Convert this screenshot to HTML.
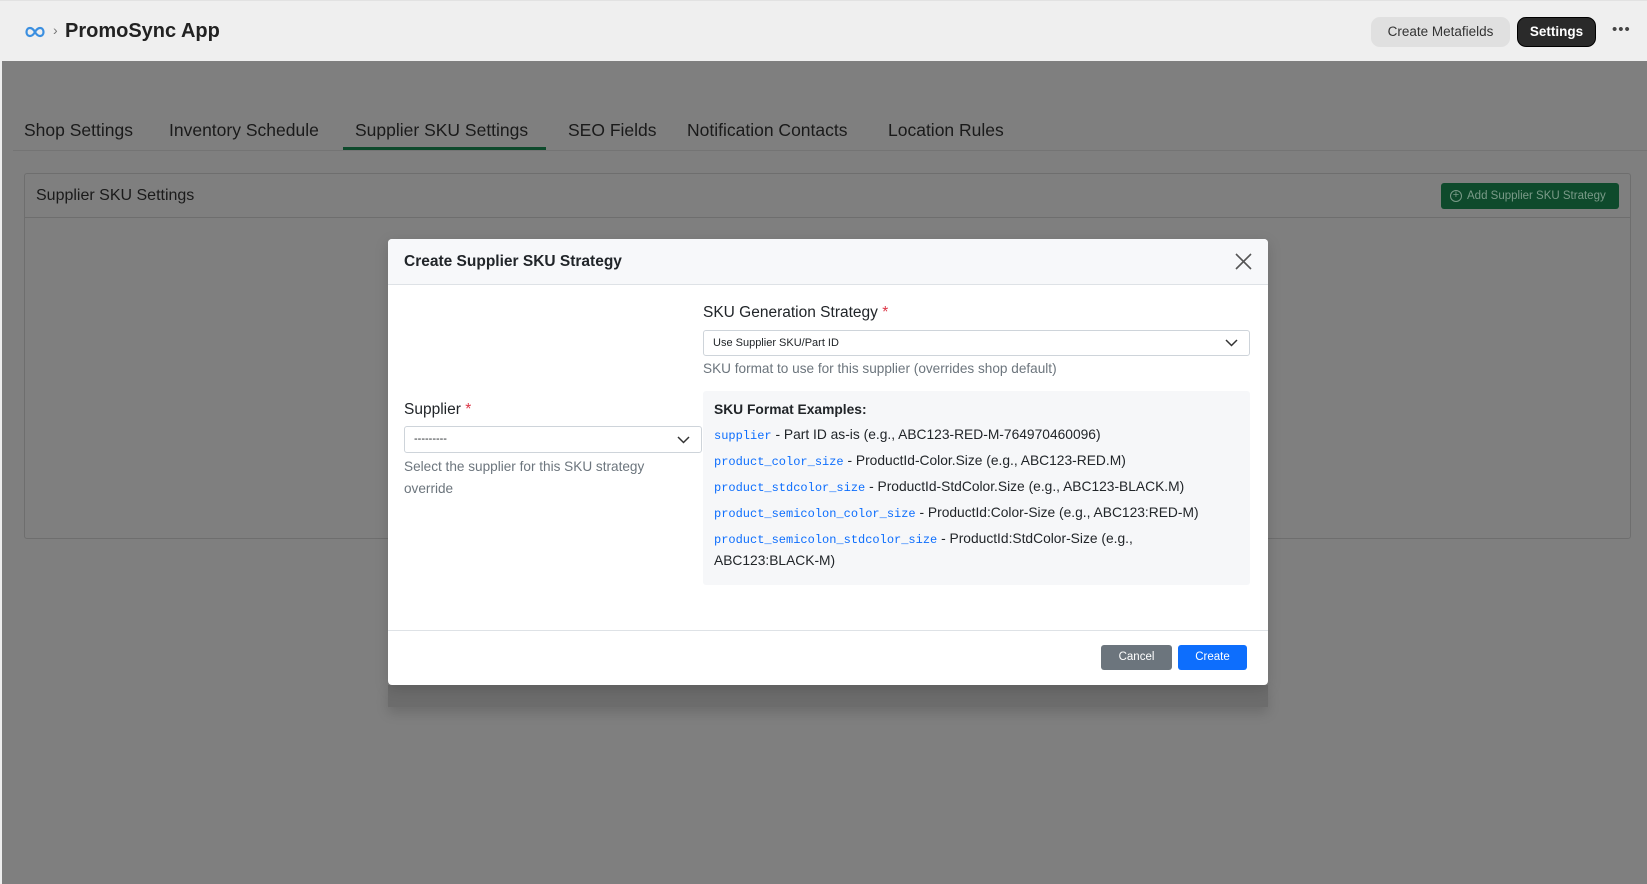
<!DOCTYPE html>
<html><head><meta charset="utf-8"><style>
*{box-sizing:border-box;margin:0;padding:0}
body{width:1647px;height:884px;overflow:hidden;font-family:"Liberation Sans",sans-serif;background:#7f7f7f;position:relative;color:#212529}
.top{position:absolute;left:0;top:0;width:1647px;height:61px;background:#efefef;border-top:1px solid #e2e2e2}
.abs{position:absolute}
.tab{position:absolute;top:120px;font-size:17.5px;color:#1a1a1a;white-space:nowrap}
.mono{font-family:"Liberation Mono",monospace;color:#0d6efd;font-size:12px}
.ex{position:absolute;left:11px;font-size:13.8px;color:#212529;white-space:nowrap}
</style></head><body>
<div class="top">
  <svg class="abs" style="left:25px;top:25px" width="20" height="12" viewBox="0 0 20 12"><path d="M10 6C8 2.5 6.5 2 5 2 2.8 2 1.5 3.8 1.5 6S2.8 10 5 10c1.5 0 3-.5 5-4zm0 0c2-3.5 3.5-4 5-4 2.2 0 3.5 1.8 3.5 4S17.2 10 15 10c-1.5 0-3-.5-5-4z" fill="none" stroke="#3b8fe0" stroke-width="2.2"/></svg>
  <div class="abs" style="left:53px;top:21px;font-size:14px;color:#777">›</div>
  <div class="abs" style="left:65px;top:19px;font-size:20px;color:#222;font-weight:600">PromoSync App</div>
  <div class="abs" style="left:1371px;top:16px;width:139px;height:30px;background:#e0e0e0;border-radius:9px;font-size:13.5px;font-weight:500;color:#333;text-align:center;line-height:30px">Create Metafields</div>
  <div class="abs" style="left:1517px;top:16px;width:79px;height:30px;background:#2a2a2a;border:1px solid #000;border-radius:9px;font-size:13.5px;font-weight:600;color:#fff;text-align:center;line-height:28px">Settings</div>
  <div class="abs" style="left:1612px;top:20px;font-size:15px;color:#444;letter-spacing:1px">•••</div>
</div>
<div class="abs" style="left:0;top:61px;width:2px;height:823px;background:#eee"></div>
<div class="tab" style="left:24px">Shop Settings</div>
<div class="tab" style="left:169px">Inventory Schedule</div>
<div class="tab" style="left:355px">Supplier SKU Settings</div>
<div class="tab" style="left:568px">SEO Fields</div>
<div class="tab" style="left:687px">Notification Contacts</div>
<div class="tab" style="left:888px">Location Rules</div>
<div class="abs" style="left:13px;top:150px;width:1634px;height:1px;background:#747474"></div>
<div class="abs" style="left:343px;top:147px;width:203px;height:3px;background:#0e4a2c"></div>
<div class="abs" style="left:24px;top:173px;width:1607px;height:366px;border:1px solid #6e6e6e;border-radius:3px"></div>
<div class="abs" style="left:24px;top:217px;width:1607px;height:1px;background:#6e6e6e"></div>
<div class="abs" style="left:36px;top:187px;font-size:16px;color:#1a1a1a">Supplier SKU Settings</div>
<div class="abs" style="left:1441px;top:183px;width:178px;height:26px;background:#0e4a2c;border-radius:3px;color:#7a9a88;font-size:11.5px;line-height:26px;padding-left:26px">Add Supplier SKU Strategy</div>
<div class="abs" style="left:1450px;top:190px;width:12px;height:12px;border:1px solid #7a9a88;border-radius:50%;font-size:11px;line-height:9px;text-align:center;color:#7a9a88">+</div>

<div class="abs" style="left:388px;top:685px;width:880px;height:22px;background:#6c6c6c;box-shadow:0 6px 12px rgba(0,0,0,.15)"></div>
<div class="abs" style="left:388px;top:239px;width:880px;height:446px;background:#fff;border-radius:4px;overflow:hidden;box-shadow:0 4px 14px rgba(0,0,0,.15)">
  <div class="abs" style="left:0;top:0;width:880px;height:46px;background:#f7f8fa;border-bottom:1px solid #dee2e6"></div>
  <div class="abs" style="left:16px;top:14px;font-size:15.5px;font-weight:600;color:#212529">Create Supplier SKU Strategy</div>
  <svg class="abs" style="left:847px;top:14px" width="17" height="17" viewBox="0 0 17 17"><path d="M1 1L16 16M16 1L1 16" stroke="#555" stroke-width="1.6"/></svg>

  <div class="abs" style="left:315px;top:65px;font-size:15.5px;color:#212529">SKU Generation Strategy <span style="color:#dc3545">*</span></div>
  <div class="abs" style="left:315px;top:91px;width:547px;height:26px;border:1px solid #ced4da;border-radius:3px;font-size:11px;line-height:24px;padding-left:9px">Use Supplier SKU/Part ID</div>
  <svg class="abs" style="left:837px;top:100px" width="13" height="8" viewBox="0 0 13 8"><path d="M1 1l5.5 5.5L12 1" fill="none" stroke="#333" stroke-width="1.5"/></svg>
  <div class="abs" style="left:315px;top:122px;font-size:13.6px;color:#6c757d">SKU format to use for this supplier (overrides shop default)</div>

  <div class="abs" style="left:16px;top:162px;font-size:15.5px;color:#212529">Supplier <span style="color:#dc3545">*</span></div>
  <div class="abs" style="left:16px;top:187px;width:298px;height:27px;border:1px solid #ced4da;border-radius:3px;font-size:11px;line-height:24px;padding-left:9px">---------</div>
  <svg class="abs" style="left:289px;top:197px" width="13" height="8" viewBox="0 0 13 8"><path d="M1 1l5.5 5.5L12 1" fill="none" stroke="#333" stroke-width="1.5"/></svg>
  <div class="abs" style="left:16px;top:217px;width:280px;font-size:13.6px;line-height:22px;color:#6c757d">Select the supplier for this SKU strategy override</div>

  <div class="abs" style="left:315px;top:152px;width:547px;height:194px;background:#f6f7f9;border-radius:3px">
    <div class="ex" style="top:11px;font-weight:700">SKU Format Examples:</div>
    <div class="ex" style="top:36px"><span class="mono">supplier</span> - Part ID as-is (e.g., ABC123-RED-M-764970460096)</div>
    <div class="ex" style="top:62px"><span class="mono">product_color_size</span> - ProductId-Color.Size (e.g., ABC123-RED.M)</div>
    <div class="ex" style="top:88px"><span class="mono">product_stdcolor_size</span> - ProductId-StdColor.Size (e.g., ABC123-BLACK.M)</div>
    <div class="ex" style="top:114px"><span class="mono">product_semicolon_color_size</span> - ProductId:Color-Size (e.g., ABC123:RED-M)</div>
    <div class="ex" style="top:140px"><span class="mono">product_semicolon_stdcolor_size</span> - ProductId:StdColor-Size (e.g.,</div>
    <div class="ex" style="top:162px">ABC123:BLACK-M)</div>
  </div>

  <div class="abs" style="left:0;top:391px;width:880px;height:1px;background:#dee2e6"></div>
  <div class="abs" style="left:713px;top:406px;width:71px;height:25px;background:#6c757d;border-radius:3px;color:#fff;font-size:11.5px;text-align:center;line-height:25px">Cancel</div>
  <div class="abs" style="left:790px;top:406px;width:69px;height:25px;background:#0d6efd;border-radius:3px;color:#fff;font-size:11.5px;text-align:center;line-height:25px">Create</div>
</div>
</body></html>
